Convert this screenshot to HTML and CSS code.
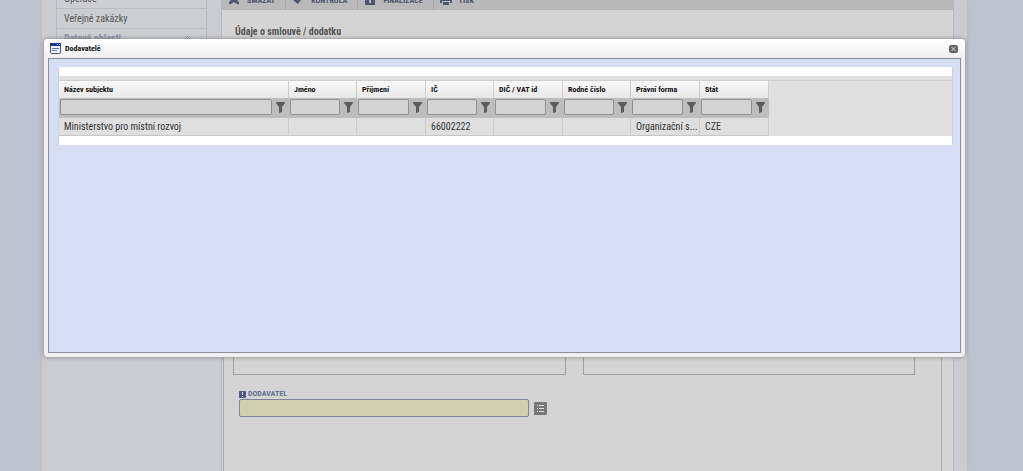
FILE: index.html
```html
<!DOCTYPE html>
<html lang="cs">
<head>
<meta charset="utf-8">
<title>Dodavatelé</title>
<link rel="stylesheet" href="styles.css">
</head>
<body>
<svg class="symbols" aria-hidden="true">
  <symbol id="funnel" viewBox="0 0 9 11"><path d="M0 0h9v1L6 5v5l-3 1V5L0 1z" fill="#5c5c5c"/></symbol>
</svg>
<div class="page">
  <nav class="sidebar">
    <a class="side-item" href="#">Operace</a>
    <a class="side-item" href="#">Veřejné zakázky</a>
    <a class="side-item side-group" href="#">Datové oblasti
      <svg width="7" height="8" viewBox="0 0 7 8"><path d="M1 4l2.500-2.500L6 4M1 7l2.500-2.500L6 7" fill="none" stroke="#858ba0"/></svg>
    </a>
  </nav>
  <main class="content">
    <div class="toolbar">
      <button class="tool"><svg width="12" height="12" viewBox="0 0 12 12"><path d="M2 0l4 3 4-3 1 1-3 4 3 3 0 2h-2L6 8l-3 2H1L1 8l3-3-3-4z" fill="#4e566b"/></svg>SMAZAT</button>
      <button class="tool"><svg width="12" height="12" viewBox="0 0 12 12"><path d="M1 6l2-2 3 2 3-5 2 2-5 7z" fill="#4e566b"/></svg>KONTROLA</button>
      <button class="tool"><svg width="12" height="12" viewBox="0 0 12 12"><path d="M2 4V3q4-5 8 0v1h1v7H1V4z" fill="#4e566b"/><path d="M5 6h2v3H5z" fill="#b9b9b9"/></svg>FINALIZACE</button>
      <button class="tool"><svg width="12" height="12" viewBox="0 0 12 12"><path d="M0 3h12v6h-2V7H2v2H0zM3 8h6v3H3zM3 0h6v2H3z" fill="#4e566b"/></svg>TISK</button>
    </div>
    <h1 class="heading">Údaje o smlouvě / dodatku</h1>
    <form class="panel">
      <div class="areas">
        <textarea class="area" aria-label="Předmět smlouvy"></textarea>
        <textarea class="area" aria-label="Popis"></textarea>
      </div>
      <label class="label" for="supplier"><svg width="7" height="7" viewBox="0 0 7 7"><rect width="7" height="7" rx="1" fill="#4a5a86"/><path d="M3 1h1v3H3zM3 5h1v1H3z" fill="#d4d4d4"/></svg>DODAVATEL</label>
      <div class="picker">
        <input class="supplier" id="supplier" type="text">
        <button class="pick" type="button" aria-label="Vybrat"><svg width="13" height="13" viewBox="0 0 13 13"><path d="M3 3h1v1H3zM5 3h5v1H5zM3 6h1v1H3zM5 6h5v1H5zM3 9h1v1H3zM5 9h5v1H5z" fill="#e4e4e4"/></svg></button>
      </div>
    </form>
  </main>
</div>

<section class="dialog" role="dialog" aria-labelledby="dialog-title">
  <header class="dialog-head">
    <svg width="11" height="11" viewBox="0 0 11 11"><rect x=".5" y=".5" width="10" height="10" rx="1" fill="#f4f6fc" stroke="#454f70"/><path d="M0 0h11v3H0z" fill="#17378a"/><path d="M7 1h1v1H7zM9 1h1v1H9z" fill="#c6d4f5"/><path d="M2 5h7v1H2zM2 7h5v1H2z" fill="#6078b5"/></svg>
    <h2 class="dialog-title" id="dialog-title">Dodavatelé</h2>
    <button class="close" aria-label="Zavřít"><svg width="9" height="8" viewBox="0 0 9 8"><rect width="9" height="8" rx="2" fill="#666"/><path d="M2.500 2l4 4M6.500 2l-4 4" stroke="#ddd"/></svg></button>
  </header>
  <div class="dialog-body">
    <div class="grid">
      <table class="table">
        <colgroup><col class="wide"><col class="narrow"><col class="normal"><col class="narrow"><col class="normal"><col class="narrow"><col class="normal"><col class="normal"></colgroup>
        <thead>
          <tr class="titles"><th>Název subjektu</th><th>Jméno</th><th>Příjmení</th><th>IČ</th><th>DIČ / VAT id</th><th>Rodné číslo</th><th>Právní forma</th><th>Stát</th></tr>
          <tr class="filters">
            <td><div class="filter"><input type="text" aria-label="Název subjektu"><button aria-label="Filtr"><svg width="9" height="11"><use href="#funnel"/></svg></button></div></td>
            <td><div class="filter"><input type="text" aria-label="Jméno"><button aria-label="Filtr"><svg width="9" height="11"><use href="#funnel"/></svg></button></div></td>
            <td><div class="filter"><input type="text" aria-label="Příjmení"><button aria-label="Filtr"><svg width="9" height="11"><use href="#funnel"/></svg></button></div></td>
            <td><div class="filter"><input type="text" aria-label="IČ"><button aria-label="Filtr"><svg width="9" height="11"><use href="#funnel"/></svg></button></div></td>
            <td><div class="filter"><input type="text" aria-label="DIČ / VAT id"><button aria-label="Filtr"><svg width="9" height="11"><use href="#funnel"/></svg></button></div></td>
            <td><div class="filter"><input type="text" aria-label="Rodné číslo"><button aria-label="Filtr"><svg width="9" height="11"><use href="#funnel"/></svg></button></div></td>
            <td><div class="filter"><input type="text" aria-label="Právní forma"><button aria-label="Filtr"><svg width="9" height="11"><use href="#funnel"/></svg></button></div></td>
            <td><div class="filter"><input type="text" aria-label="Stát"><button aria-label="Filtr"><svg width="9" height="11"><use href="#funnel"/></svg></button></div></td>
          </tr>
        </thead>
        <tbody>
          <tr class="record"><td>Ministerstvo pro místní rozvoj</td><td></td><td></td><td>66002222</td><td></td><td></td><td>Organizační s...</td><td>CZE</td></tr>
        </tbody>
      </table>
    </div>
  </div>
</section>
</body>
</html>
```
FILE: styles.css
```css
* { box-sizing: border-box; }

body {
  margin: 0;
  height: 100vh;
  overflow: hidden;
  background: #bfc3d0;
  font-family: "Roboto Condensed", Roboto, sans-serif;
  font-size: 10px;
  color: #444;
}

button {
  padding: 0;
  border: 0;
  background: none;
  font: inherit;
  color: inherit;
}

svg { display: block; flex: none; }

.symbols { position: absolute; width: 0; height: 0; }

.page {
  display: flex;
  gap: 14px;
  min-height: 100vh;
  margin: 0 56px 0 42px;
  padding: 0 13px 0 14px;
  background: #cbccd1;
  box-shadow: 0 0 3px #b4b6be;
}

.sidebar {
  flex: 0 0 151px;
  align-self: flex-start;
  margin-top: -11px;
  border: 1px solid #b8b9be;
  border-top: 0;
  background: #cdced1;
}

.side-item {
  display: flex;
  align-items: center;
  justify-content: space-between;
  height: 20px;
  padding: 0 15px 0 7px;
  border-bottom: 1px solid #bcbdc1;
  font-size: 10px;
  color: #555;
  text-decoration: none;
}

.side-group { font-weight: bold; color: #858ba0; }

.content {
  flex: 1;
  display: flex;
  flex-direction: column;
  border: 1px solid #b8b9be;
  border-width: 0 1px;
  background: #d4d4d4;
}

.toolbar {
  display: flex;
  height: 20px;
  margin-top: -10px;
  background: #b9b9b9;
}

.tool {
  display: flex;
  align-items: center;
  gap: 7px;
  padding: 0 10px 0 6px;
  border-right: 1px solid #a9a9a9;
  font-size: 8px;
  font-weight: bold;
  color: #4e566b;
}

.tool:last-child { border-right: 0; }

.heading {
  margin: 15px 13px 10px;
  font-size: 10px;
  line-height: 14px;
  color: #555;
}

.panel {
  flex: 1;
  margin: 0 11px 0 1px;
  padding: 0 10px 0 9px;
  border: 1px solid #aaa;
  border-bottom: 0;
}

.areas {
  display: grid;
  grid-template-columns: 1fr 1fr;
  gap: 17px;
  margin-right: 16px;
}

.area {
  display: block;
  width: 100%;
  height: 325px;
  border: 1px solid #a0a0a0;
  background: none;
  resize: none;
}

.label {
  display: flex;
  align-items: center;
  gap: 2px;
  margin: 14px 6px 0;
  font-size: 8px;
  line-height: 10px;
  font-weight: bold;
  color: #65708f;
}

.picker {
  display: flex;
  align-items: center;
  gap: 5px;
  margin: 0 6px;
}

.supplier {
  width: 290px;
  height: 18px;
  border: 1px solid #7d8698;
  border-radius: 2px;
  background: #d1d0ae;
}

.pick { border-radius: 1px; background: #777; }

.dialog {
  position: absolute;
  top: 39px;
  left: 44px;
  right: 58px;
  padding: 0 4px 4px;
  border-radius: 4px;
  background: #f0f0f0;
  box-shadow: 0 0 4px #777;
}

.dialog-head {
  display: flex;
  align-items: center;
  gap: 4px;
  height: 19px;
  margin: 0 -4px;
  padding: 0 7px 0 6px;
  border-radius: 4px 4px 0 0;
  background: linear-gradient(#fff, #f0f0f0);
}

.dialog-title {
  flex: 1;
  margin: 0;
  font-size: 8px;
  line-height: 10px;
  color: #111;
}

.dialog-body {
  min-height: 295px;
  padding: 8px 7px 8px 9px;
  border: 1px solid #8b8f98;
  background: #d6def6;
}

.grid {
  border: 1px solid #d0d3dc;
  border-width: 0 1px;
  background: #dfdfdf;
}

.grid::before {
  content: "";
  display: block;
  height: 4px;
  border-top: 9px solid #fff;
  border-bottom: 1px solid #cfcfcf;
}

.grid::after {
  content: "";
  display: block;
  height: 9px;
  background: #fff;
}

.table {
  table-layout: fixed;
  width: 709px;
  border-collapse: separate;
  border-spacing: 0;
}

.wide { width: 230px; }
.normal { width: 69px; }
.narrow { width: 68px; }

.table th, .table td {
  padding: 0 0 0 5px;
  border-right: 1px solid #ccc;
  overflow: hidden;
  text-align: left;
  white-space: nowrap;
}

.titles { height: 17px; }

.table th {
  background: linear-gradient(#f8f8f8, #e8e8e8);
  font-size: 8px;
  color: #111;
}

.filters { height: 20px; }

.table .filters td {
  padding: 1px 4px 3px 1px;
  border-right: 0;
  background: #bdbdbd;
}

.filter { display: flex; align-items: center; gap: 4px; }

.filter input {
  flex: 1;
  min-width: 0;
  height: 16px;
  border: 1px solid #919191;
  border-radius: 2px;
  background: #d4d4d4;
}

.record { height: 18px; }

.table .record td {
  border-bottom: 1px solid #c6c6c6;
  font-size: 10px;
  color: #333;
}
```
